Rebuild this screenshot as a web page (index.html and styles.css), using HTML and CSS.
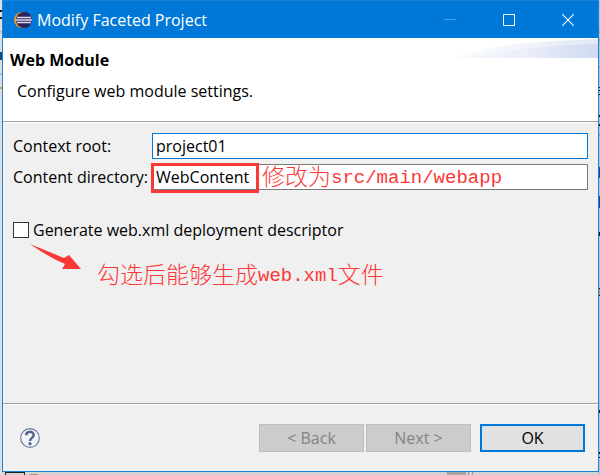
FILE: index.html
```html
<!DOCTYPE html>
<html lang="en">
<head>
<meta charset="utf-8">
<title>Modify Faceted Project</title>
<link rel="stylesheet" href="styles.css">
</head>
<body>
<svg class="behind-right" viewBox="0 0 2 475" aria-hidden="true">
  <path d="M0 32h2M0 40h2M0 67h2M0 135h2" stroke="#6d8799"/>
  <path d="M0 87h2v1H0zM0 90h2v1H0zM0 94h2v1H0zM0 115h2v2H0zM0 124h2v2H0zM0 232h2v4H0zM0 288h2v1H0zM0 295h2v1H0zM0 410h2v3H0zM0 452h2v2H0zM0 457h2v1H0z" fill="#111"/>
  <path d="M0 167h2v11H0zM0 196h2v12H0z" fill="#0d4d91"/>
  <path d="M0 289h2v6H0z" fill="#c29a4c"/>
</svg>
<svg class="behind-left" viewBox="0 0 2 475" aria-hidden="true">
  <path d="M0 10h2v2H0zM0 17h2v2H0z" fill="#111"/>
  <path d="M0 32h2M0 74h2" stroke="#999"/>
  <path d="M0 52h2v8H0z" fill="#174a70"/>
  <path d="M0 87h2v2H0z" fill="#d6a33b"/>
</svg>
<main class="dialog">
  <header class="titlebar">
    <svg class="logo" viewBox="0 0 18 18" aria-hidden="true">
      <circle cx="8" cy="9" r="8" fill="#e69a35"/>
      <circle cx="10" cy="9" r="8" fill="#2d2259"/>
      <path d="M3 6.5h14M2 9h16M3 11.5h14" stroke="#dedcf0" stroke-width="1.4"/>
    </svg>
    <h1 class="title">Modify Faceted Project</h1>
    <div class="window-controls">
      <button class="window-button" aria-label="Minimize" disabled><svg viewBox="0 0 12 12"><path d="M0 5.5h12" stroke="#4a9ee5"/></svg></button>
      <button class="window-button" aria-label="Maximize"><svg viewBox="0 0 12 12"><path d="M.5.5h11v11H.5z" fill="none" stroke="#fff"/></svg></button>
      <button class="window-button" aria-label="Close"><svg viewBox="0 0 12 12"><path d="M.3.3l11.4 11.4M11.7.3L.3 11.7" stroke="#fff" stroke-width="1.1"/></svg></button>
    </div>
  </header>
  <section class="banner">
    <h2 class="heading">Web Module</h2>
    <p class="description">Configure web module settings.</p>
    <svg class="swoosh" viewBox="0 0 140 20" aria-hidden="true">
      <defs><linearGradient id="fade"><stop offset="0" stop-color="#f7f9fd"/><stop offset=".5" stop-color="#eaeef8"/><stop offset="1" stop-color="#cfd9f2"/></linearGradient></defs>
      <path d="M0 20C10 11 62 3 140 1v19z" fill="url(#fade)" opacity=".65"/>
      <path d="M0 20C35 14 75 8 140 6v14z" fill="url(#fade)"/>
    </svg>
  </section>
  <form class="form">
    <div class="fields">
      <label for="root">Context root:</label>
      <input class="text focused" id="root" type="text" value="project01">
      <label for="directory">Content directory:</label>
      <div class="field">
        <input class="text" id="directory" type="text" value="WebContent">
        <div class="highlight"></div>
        <p class="note field-note">修改为<span class="latin">src/main/webapp</span></p>
      </div>
    </div>
    <label class="option"><input class="check" type="checkbox">Generate web.xml deployment descriptor</label>
    <div class="callout">
      <svg class="arrow" viewBox="0 0 52 26" aria-hidden="true"><path d="M0 0L34 14 39 11 51 25H32L35 20Q20 14 0 0z" fill="#fb3838"/></svg>
      <p class="note">勾选后能够生成<span class="latin">web.xml</span>文件</p>
    </div>
  </form>
  <footer class="footer">
    <button class="help" aria-label="Help"><svg viewBox="0 0 20 20"><circle cx="10" cy="10" r="9.3" fill="#f3f4f7" stroke="#687da4" stroke-width="1.2"/><path d="M6.2 7.2C6.2 2.8 13.7 2.8 13.7 7c0 3-3.7 2.8-3.7 6" fill="none" stroke="#52648e" stroke-width="2.5"/><circle cx="10" cy="15.7" r="1.6" fill="#52648e"/></svg></button>
    <div class="steps">
      <button class="button" disabled>&lt; Back</button>
      <button class="button" disabled>Next &gt;</button>
    </div>
    <button class="button primary">OK</button>
  </footer>
</main>
<div class="behind-bottom" aria-hidden="true"><i class="edge-box"></i><i class="edge-icon"></i><i class="edge-thumb"></i><i class="edge-line"></i></div>
</body>
</html>
```
FILE: styles.css
```css
* { box-sizing: border-box; }
body {
  position: relative;
  display: flex;
  flex-direction: column;
  min-height: 100vh;
  margin: 0;
  overflow: hidden;
  background: #d5d3d1;
  color: #000;
  font: 16px/24px "Open Sans", "Noto Sans", sans-serif;
}
h1, h2, p { margin: 0; }
svg { display: block; }
button, input { font: inherit; color: inherit; }
.behind-right, .behind-left { position: absolute; top: 0; width: 2px; height: 475px; }
.behind-right { right: 0; background: #a9c7df; }
.behind-left { left: 0; background: #dedede; }
.dialog {
  position: relative;
  flex: 1;
  display: flex;
  flex-direction: column;
  margin: 0 1px 0 2px;
  border: 1px solid #1883d7;
  background: #f0f0f0;
}
.titlebar {
  display: flex;
  align-items: center;
  height: 37px;
  padding-left: 11px;
  background: #0078d7;
  color: #fff;
}
.logo { width: 18px; height: 18px; }
.title { margin-left: 5px; font-size: 16px; font-weight: 400; }
.window-controls { display: flex; margin-left: auto; }
.window-button {
  display: grid;
  place-items: center;
  width: 59px;
  height: 36px;
  padding: 0;
  border: 0;
  background: none;
}
.window-button:last-child { width: 60px; }
.window-button svg { width: 12px; height: 12px; }
.banner {
  position: relative;
  height: 84px;
  padding: 10px 7px;
  border-bottom: 1px solid #a0a0a0;
  background: #fff;
}
.heading { font-size: 16px; line-height: 24px; }
.description { margin-top: 7px; padding-left: 7px; }
.swoosh { position: absolute; top: 0; right: 0; width: 140px; height: 20px; }
.form { flex: 1; padding: 10px; border-top: 1px solid #fff; }
.fields {
  display: grid;
  grid-template-columns: 134px 1fr;
  column-gap: 5px;
  row-gap: 5px;
  align-items: center;
  white-space: nowrap;
}
.field { position: relative; }
.text {
  display: block;
  width: 100%;
  height: 26px;
  padding: 0 3px;
  border: 1px solid #7a7a7a;
  border-radius: 0;
  outline: 0;
  background: #fff;
}
.focused { border-color: #0078d7; }
.highlight {
  position: absolute;
  top: -1px;
  left: -1px;
  width: 108px;
  height: 30px;
  border: 3px solid #fb3838;
}
.note {
  color: #fb3838;
  font: 300 23px/28px "Noto Sans CJK SC", sans-serif;
  white-space: nowrap;
}
.latin { font: 19px/20px "Liberation Mono", monospace; vertical-align: 2px; }
.field-note { position: absolute; top: -3px; left: 110px; }
.option { display: flex; align-items: center; gap: 4px; margin-top: 28px; }
.check {
  appearance: none;
  width: 16px;
  height: 16px;
  margin: 0;
  border: 1px solid #333;
  background: #fff;
}
.callout { display: flex; align-items: flex-start; gap: 15px; padding: 2px 0 0 17px; }
.arrow { width: 52px; height: 26px; }
.callout .note { margin-top: 15px; }
.footer {
  display: flex;
  align-items: center;
  height: 68px;
  padding: 0 13px 0 17px;
  border-top: 1px solid #a0a0a0;
  box-shadow: inset 0 1px #fff;
}
.help { width: 20px; height: 20px; padding: 0; border: 0; background: none; }
.steps { display: flex; gap: 2px; margin: 0 9px 0 auto; }
.button {
  width: 105px;
  height: 28px;
  padding: 0;
  border: 1px solid #bfbfbf;
  border-radius: 0;
  background: #ccc;
  color: #838383;
}
.primary { border: 2px solid #0078d7; background: #e1e1e1; color: #000; }
.behind-bottom { display: flex; height: 3px; padding-left: 5px; }
.edge-box { width: 20px; border: solid #222; border-width: 1px 1px 0; }
.edge-icon { width: 8px; height: 1px; margin: 2px 0 0 5px; background: #a9945b; }
.edge-thumb { width: 19px; margin-left: 409px; background: #aaa6a3; }
.edge-line { width: 5px; margin-left: 2px; border: solid #999; border-width: 0 1px; }
```
